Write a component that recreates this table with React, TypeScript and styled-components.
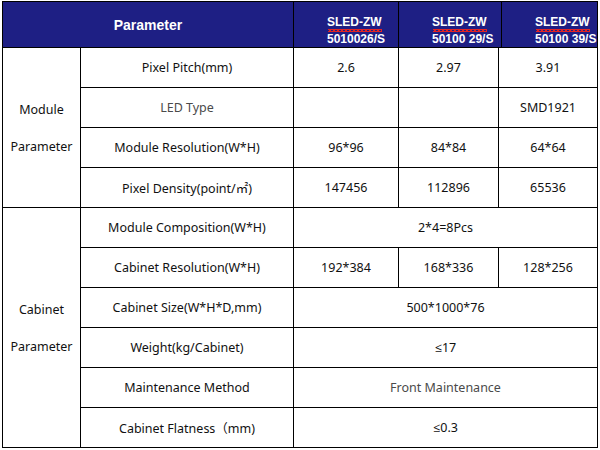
import React from "react";
import styled, { createGlobalStyle } from "styled-components";

const Global = createGlobalStyle`
  html, body { margin: 0; padding: 0; background: #fff; }
  body { font-family: "Noto Sans", "Open Sans", "DejaVu Sans", "Noto Sans CJK KR", sans-serif; }
`;

const Page = styled.div`
  padding: 1px 0 0 2px;
`;

const Frame = styled.div`
  width: 594px;
  background: #000;
  border: 1px solid #000;
  display: flex;
  flex-direction: column;
  gap: 1px;
`;

const HeaderGrid = styled.div`
  display: grid;
  grid-template-columns: 290px 104px 102px 95px;
  grid-template-rows: 45px;
  gap: 1px;
`;

const HeadCell = styled.div<{ $title?: boolean }>`
  background: #1e1f84;
  color: #fff;
  font-family: "Liberation Sans", Arial, sans-serif;
  font-weight: bold;
  display: flex;
  ${(p) =>
    p.$title
      ? `align-items: center; justify-content: center; font-size: 14px;`
      : `flex-direction: column; align-items: flex-start; padding: 12px 0 0 33px; font-size: 12px; line-height: 17px;`}
`;

const Squiggle = styled.span`
  position: relative;
  &::after {
    content: "";
    position: absolute;
    left: 1px;
    right: 0;
    bottom: -1px;
    height: 3px;
    background-image:
      linear-gradient(135deg, transparent 40%, #e02424 40%, #e02424 65%, transparent 65%),
      linear-gradient(45deg, transparent 40%, #e02424 40%, #e02424 65%, transparent 65%);
    background-size: 4px 3px;
    background-repeat: repeat-x;
  }
`;

const BodyGrid = styled.div`
  display: grid;
  grid-template-columns: 77px 212px 104px 99px 98px;
  grid-auto-rows: 39px;
  gap: 1px;
`;

const Cell = styled.div<{ $span?: number; $rows?: number; $muted?: boolean }>`
  background: #fff;
  display: flex;
  align-items: center;
  justify-content: center;
  font-size: 12.5px;
  color: ${(p) => (p.$muted ? "#4a4a4a" : "#111")};
  ${(p) => (p.$span ? `grid-column: span ${p.$span};` : "")}
  ${(p) => (p.$rows ? `grid-row: span ${p.$rows};` : "")}
  white-space: nowrap;
`;

const GroupCell = styled(Cell)`
  flex-direction: column;
  line-height: 37px;
`;

const models = [
  ["SLED-ZW", "5010026/S"],
  ["SLED-ZW", "50100 29/S"],
  ["SLED-ZW", "50100 39/S"],
];

export default function App() {
  return (
    <>
      <Global />
      <Page>
        <Frame>
          <HeaderGrid>
            <HeadCell $title>Parameter</HeadCell>
            {models.map(([a, b], i) => (
              <HeadCell key={i}>
                <Squiggle>{a}</Squiggle>
                <span>{b}</span>
              </HeadCell>
            ))}
          </HeaderGrid>
          <BodyGrid>
            <GroupCell $rows={4}>
              <span>Module</span>
              <span>Parameter</span>
            </GroupCell>
            <Cell>Pixel Pitch(mm)</Cell>
            <Cell>2.6</Cell>
            <Cell>2.97</Cell>
            <Cell>3.91</Cell>

            <Cell $muted>LED Type</Cell>
            <Cell />
            <Cell />
            <Cell>SMD1921</Cell>

            <Cell>Module Resolution(W*H)</Cell>
            <Cell>96*96</Cell>
            <Cell>84*84</Cell>
            <Cell>64*64</Cell>

            <Cell>Pixel Density(point/㎡)</Cell>
            <Cell>147456</Cell>
            <Cell>112896</Cell>
            <Cell>65536</Cell>

            <GroupCell $rows={6}>
              <span>Cabinet</span>
              <span>Parameter</span>
            </GroupCell>
            <Cell>Module Composition(W*H)</Cell>
            <Cell $span={3}>2*4=8Pcs</Cell>

            <Cell>Cabinet Resolution(W*H)</Cell>
            <Cell>192*384</Cell>
            <Cell>168*336</Cell>
            <Cell>128*256</Cell>

            <Cell>Cabinet Size(W*H*D,mm)</Cell>
            <Cell $span={3}>500*1000*76</Cell>

            <Cell>Weight(kg/Cabinet)</Cell>
            <Cell $span={3}>≤17</Cell>

            <Cell>Maintenance Method</Cell>
            <Cell $span={3} $muted>Front Maintenance</Cell>

            <Cell>Cabinet Flatness（mm)</Cell>
            <Cell $span={3}>≤0.3</Cell>
          </BodyGrid>
        </Frame>
      </Page>
    </>
  );
}
